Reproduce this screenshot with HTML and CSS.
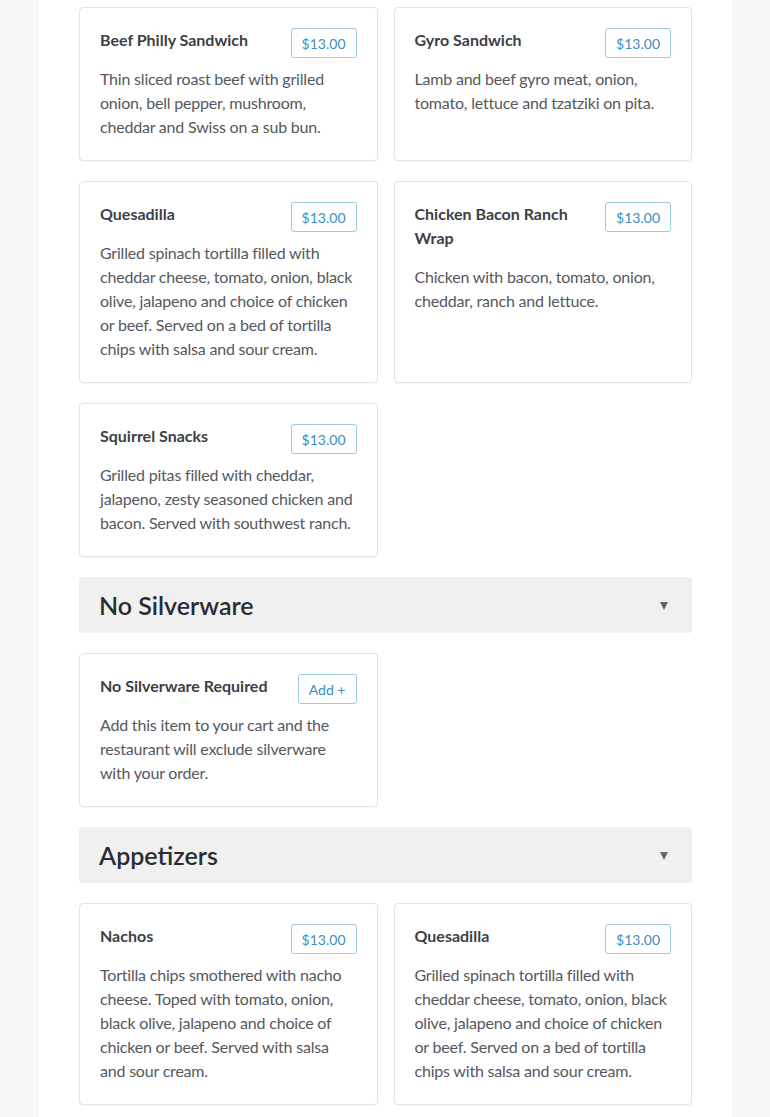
FILE: index.html
```html
<!DOCTYPE html>
<html>
<head>
<meta charset="utf-8">
<link rel="stylesheet" href="styles.css">
</head>
<body>
<div class="page">
  <div class="grid">
    <div class="card">
      <div class="card-head"><h3 class="item-name">Beef Philly Sandwich</h3><span class="price">$13.00</span></div>
      <p class="desc">Thin sliced roast beef with grilled onion, bell pepper, mushroom, cheddar and Swiss on a sub bun.</p>
    </div>
    <div class="card">
      <div class="card-head"><h3 class="item-name">Gyro Sandwich</h3><span class="price">$13.00</span></div>
      <p class="desc">Lamb and beef gyro meat, onion, tomato, lettuce and tzatziki on pita.</p>
    </div>
    <div class="card">
      <div class="card-head"><h3 class="item-name">Quesadilla</h3><span class="price">$13.00</span></div>
      <p class="desc">Grilled spinach tortilla filled with cheddar cheese, tomato, onion, black olive, jalapeno and choice of chicken or beef. Served on a bed of tortilla chips with salsa and sour cream.</p>
    </div>
    <div class="card">
      <div class="card-head"><h3 class="item-name">Chicken Bacon Ranch Wrap</h3><span class="price">$13.00</span></div>
      <p class="desc">Chicken with bacon, tomato, onion, cheddar, ranch and lettuce.</p>
    </div>
    <div class="card">
      <div class="card-head"><h3 class="item-name">Squirrel Snacks</h3><span class="price">$13.00</span></div>
      <p class="desc">Grilled pitas filled with cheddar, jalapeno, zesty seasoned chicken and bacon. Served with southwest ranch.</p>
    </div>
  </div>

  <div class="category"><h2 class="cat-title">No Silverware</h2><span class="arrow"></span></div>
  <div class="grid">
    <div class="card">
      <div class="card-head"><h3 class="item-name">No Silverware Required</h3><span class="price">Add +</span></div>
      <p class="desc">Add this item to your cart and the restaurant will exclude silverware with your order.</p>
    </div>
  </div>

  <div class="category"><h2 class="cat-title">Appetizers</h2><span class="arrow"></span></div>
  <div class="grid">
    <div class="card">
      <div class="card-head"><h3 class="item-name">Nachos</h3><span class="price">$13.00</span></div>
      <p class="desc">Tortilla chips smothered with nacho cheese. Toped with tomato, onion, black olive, jalapeno and choice of chicken or beef. Served with salsa and sour cream.</p>
    </div>
    <div class="card">
      <div class="card-head"><h3 class="item-name">Quesadilla</h3><span class="price">$13.00</span></div>
      <p class="desc">Grilled spinach tortilla filled with cheddar cheese, tomato, onion, black olive, jalapeno and choice of chicken or beef. Served on a bed of tortilla chips with salsa and sour cream.</p>
    </div>
  </div>
</div>
</body>
</html>
```

FILE: styles.css
```css
html, body {
  margin: 0;
  padding: 0;
  background: #f7f7f7;
  font-family: Lato, "Open Sans", Arial, sans-serif;
}
.page {
  margin-left: 39px;
  width: 693px;
  box-sizing: border-box;
  background: #ffffff;
  padding: 7px 40px 20px 40px;
  min-height: 1117px;
}
.grid {
  display: grid;
  grid-template-columns: 1fr 1fr;
  column-gap: 16px;
  row-gap: 20px;
  margin-bottom: 20px;
}
.card {
  border: 1px solid #e3e3e3;
  border-radius: 4px;
  padding: 20px 20px 21px 20px;
  background: #fff;
  box-shadow: 0 1px 1px rgba(0,0,0,0.03);
}
.card-head {
  display: flex;
  justify-content: space-between;
  align-items: flex-start;
  gap: 12px;
}
.item-name {
  margin: 0 0 15px 0;
  font-size: 16px;
  line-height: 24px;
  font-weight: 700;
  color: #3c3f44;
}
.price {
  flex: none;
  box-sizing: border-box;
  height: 30px;
  line-height: 29px;
  padding: 0 10px;
  border: 1px solid #9ccbe0;
  border-radius: 3px;
  font-size: 14px;
  color: #3a8ec2;
}
.desc {
  margin: 0;
  font-size: 16px;
  line-height: 24px;
  letter-spacing: -0.2px;
  color: #55585d;
}
.category {
  display: flex;
  align-items: center;
  justify-content: space-between;
  height: 56px;
  box-sizing: border-box;
  padding: 0 24px 0 20px;
  background: #f0f0f0;
  border-radius: 3px;
  margin-bottom: 20px;
}
.cat-title {
  margin: 0;
  font-size: 25px;
  font-weight: 600;
  color: #2a2d31;
  line-height: 30px;
}
.arrow {
  width: 0;
  height: 0;
  border-left: 4px solid transparent;
  border-right: 4px solid transparent;
  border-top: 8px solid #5e6670;
  margin-top: 2px;
}
```
